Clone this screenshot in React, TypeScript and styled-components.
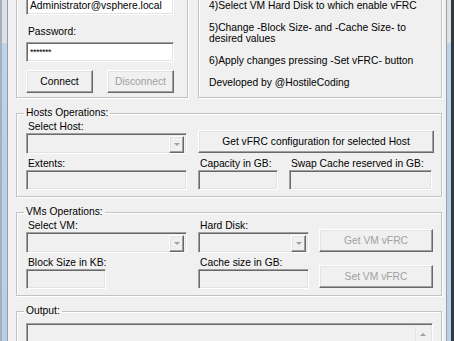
import React from "react";
import styled, { createGlobalStyle, css } from "styled-components";

const GlobalStyle = createGlobalStyle`
  html, body {
    margin: 0;
    padding: 0;
    background: #f0f0f0;
    overflow: hidden;
  }
  body {
    font-family: "Liberation Sans", Arial, sans-serif;
    font-size: 10.3px;
    color: #000;
  }
`;

const sunken = css`
  box-sizing: border-box;
  border: 1px solid;
  border-color: #a0a0a0 #ffffff #ffffff #a0a0a0;
  box-shadow: inset 1px 1px 0 #696969, inset -1px -1px 0 #e3e3e3;
`;

const raised = css`
  box-sizing: border-box;
  border: 1px solid;
  border-color: #ffffff #696969 #696969 #ffffff;
  box-shadow: inset -1px -1px 0 #a0a0a0, inset 1px 1px 0 #e3e3e3;
`;

const Window = styled.div`
  display: flex;
  height: 341px;
  overflow: hidden;
  background: #f0f0f0;
`;

const FrameEdge = styled.div<{ $side: "left" | "right" }>`
  flex: 0 0 8px;
  box-sizing: border-box;
  background: linear-gradient(#dbe2e9 0, #dbe2e9 43px, #bcd3ec 43px, #b7cfea 100%);
  ${(p) =>
    p.$side === "left"
      ? css`
          border-left: 2px solid #a6b0bb;
          border-right: 1px solid #9c9c9c;
        `
      : css`
          border-left: 1px solid #a0a0a0;
          border-right: 3px solid #34393e;
        `}
`;

const Client = styled.div`
  flex: 1;
  min-width: 0;
  display: flex;
  flex-direction: column;
  padding: 0 4px 0 8px;
`;

const group = css`
  margin: 0;
  min-width: 0;
  border: 1px solid #c2c2c2;
  box-shadow: inset 1px 1px 0 #ffffff, 1px 1px 0 #ffffff;
`;

const TopRow = styled.div`
  display: flex;
  gap: 10px;
  height: 110px;
  margin-top: -12px;
`;

const LoginGroup = styled.fieldset`
  ${group};
  box-sizing: border-box;
  width: 172px;
  padding: 6px 9px 4px;
  display: flex;
  flex-direction: column;
`;

const HelpGroup = styled.fieldset`
  ${group};
  box-sizing: border-box;
  flex: 1;
  padding: 11px 9px 0 10px;
`;

const HelpText = styled.p`
  margin: 0 0 11px;
  line-height: 11px;
  white-space: nowrap;
`;

const Group = styled.fieldset`
  ${group};
  margin-top: 8px;
  padding: 0 9px 6px;
`;

const Legend = styled.legend`
  margin-left: -2px;
  padding: 0 2px;
  line-height: 14px;
`;

const Field = styled.div`
  display: flex;
  flex-direction: column;
  min-width: 0;
`;

const FieldLabel = styled.div<{ $gap?: number }>`
  line-height: 13px;
  padding-left: 2px;
  white-space: nowrap;
  margin-top: ${(p) => p.$gap ?? 0}px;
`;

const TextBox = styled.div<{ $enabled?: boolean; $width?: number; $gap?: number }>`
  ${sunken};
  height: 20px;
  width: ${(p) => (p.$width ? `${p.$width}px` : "100%")};
  margin-top: ${(p) => p.$gap ?? 0}px;
  background: ${(p) => (p.$enabled ? "#ffffff" : "#f0f0f0")};
  padding: 3px 3px 0;
  line-height: 13px;
  white-space: nowrap;
  overflow: hidden;
`;

const Masked = styled.span`
  font-size: 9px;
  letter-spacing: -0.5px;
  vertical-align: 1px;
`;

const Combo = styled.div`
  ${sunken};
  height: 21px;
  width: 100%;
  background: #f0f0f0;
  display: flex;
  justify-content: flex-end;
  padding: 2px;
`;

const DropButton = styled.div`
  ${raised};
  width: 15px;
  height: 17px;
  display: flex;
  align-items: center;
  justify-content: center;
`;

const Arrow = styled.span<{ $up?: boolean }>`
  width: 0;
  height: 0;
  border-left: 3px solid transparent;
  border-right: 3px solid transparent;
  ${(p) =>
    p.$up
      ? css`
          border-bottom: 3px solid #a0a0a0;
        `
      : css`
          border-top: 3px solid #a0a0a0;
        `}
`;

const Button = styled.button<{ $width: number; $span?: number }>`
  ${raised};
  width: ${(p) => p.$width}px;
  height: 23px;
  margin: 0;
  padding: 0;
  background: #f0f0f0;
  font: inherit;
  color: #000;
  align-self: end;
  grid-column: ${(p) => (p.$span ? `span ${p.$span}` : "auto")};
  &:disabled {
    color: #a0a0a0;
  }
`;

const ButtonRow = styled.div`
  display: flex;
  gap: 14px;
  margin-top: 8px;
`;

const HostGrid = styled.div`
  display: grid;
  grid-template-columns: 161px 80px 143px;
  column-gap: 11px;
  row-gap: 3px;
`;

const VmGrid = styled.div`
  display: grid;
  grid-template-columns: 161px 111px 114px;
  column-gap: 11px;
  row-gap: 3px;
  & > ${Button} {
    margin-bottom: 1px;
    margin-left: -1px;
  }
`;

const HostButton = styled(Button)`
  margin-bottom: 1px;
`;

const OutputGroup = styled(Group)`
  padding-top: 5px;
  padding-bottom: 20px;
`;

const OutputBox = styled.div`
  ${sunken};
  width: 407px;
  height: 60px;
  background: #f0f0f0;
  display: flex;
  justify-content: flex-end;
  padding: 2px;
`;

const ScrollBar = styled.div`
  width: 14px;
  border-left: 1px solid #e6e6e6;
  display: flex;
  flex-direction: column;
  align-items: center;
`;

const ScrollUp = styled.div`
  height: 17px;
  display: flex;
  align-items: center;
  justify-content: center;
`;

const ComboBox = () => (
  <Combo>
    <DropButton>
      <Arrow />
    </DropButton>
  </Combo>
);

const App = () => {
  return (
    <>
      <GlobalStyle />
      <Window>
        <FrameEdge $side="left" />
        <Client>
          <TopRow>
            <LoginGroup>
              <TextBox $enabled $width={148}>
                Administrator@vsphere.local
              </TextBox>
              <FieldLabel $gap={10}>Password:</FieldLabel>
              <TextBox $enabled $width={148} $gap={4}>
                <Masked>*******</Masked>
              </TextBox>
              <ButtonRow>
                <Button $width={67}>Connect</Button>
                <Button $width={67} disabled>
                  Disconnect
                </Button>
              </ButtonRow>
            </LoginGroup>
            <HelpGroup>
              <HelpText>4)Select VM Hard Disk to which enable vFRC</HelpText>
              <HelpText>
                5)Change -Block Size- and -Cache Size- to
                <br />
                desired values
              </HelpText>
              <HelpText>6)Apply changes pressing -Set vFRC- button</HelpText>
              <HelpText>Developed by @HostileCoding</HelpText>
            </HelpGroup>
          </TopRow>

          <Group>
            <Legend>Hosts Operations:</Legend>
            <HostGrid>
              <Field>
                <FieldLabel>Select Host:</FieldLabel>
                <ComboBox />
              </Field>
              <HostButton $width={236} $span={2}>
                Get vFRC configuration for selected Host
              </HostButton>
              <Field>
                <FieldLabel>Extents:</FieldLabel>
                <TextBox />
              </Field>
              <Field>
                <FieldLabel>Capacity in GB:</FieldLabel>
                <TextBox />
              </Field>
              <Field>
                <FieldLabel>Swap Cache reserved in GB:</FieldLabel>
                <TextBox />
              </Field>
            </HostGrid>
          </Group>

          <Group>
            <Legend>VMs Operations:</Legend>
            <VmGrid>
              <Field>
                <FieldLabel>Select VM:</FieldLabel>
                <ComboBox />
              </Field>
              <Field>
                <FieldLabel>Hard Disk:</FieldLabel>
                <ComboBox />
              </Field>
              <Button $width={114} disabled>
                Get VM vFRC
              </Button>
              <Field>
                <FieldLabel>Block Size in KB:</FieldLabel>
                <TextBox $width={80} />
              </Field>
              <Field>
                <FieldLabel>Cache size in GB:</FieldLabel>
                <TextBox />
              </Field>
              <Button $width={114} disabled>
                Set VM vFRC
              </Button>
            </VmGrid>
          </Group>

          <OutputGroup>
            <Legend>Output:</Legend>
            <OutputBox>
              <ScrollBar>
                <ScrollUp>
                  <Arrow $up />
                </ScrollUp>
              </ScrollBar>
            </OutputBox>
          </OutputGroup>
        </Client>
        <FrameEdge $side="right" />
      </Window>
    </>
  );
};

export default App;
